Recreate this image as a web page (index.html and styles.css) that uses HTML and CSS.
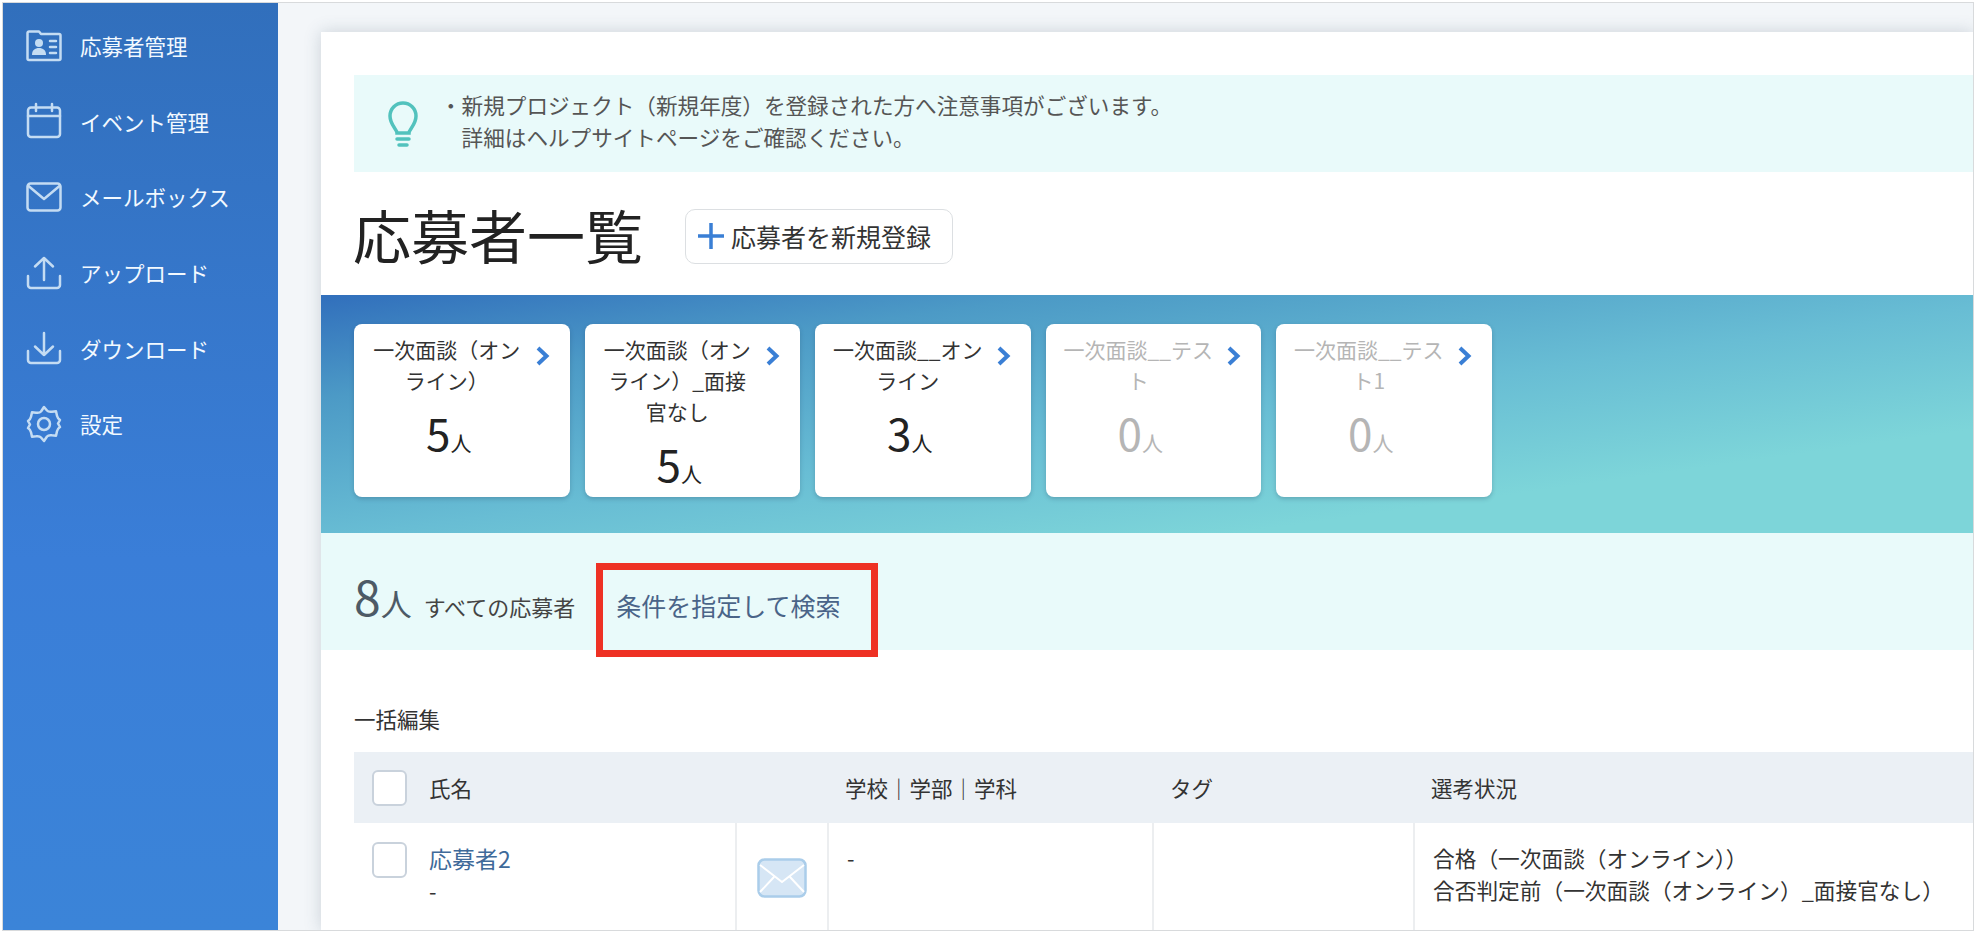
FILE: index.html
```html
<!DOCTYPE html>
<html lang="ja">
<head>
    <meta charset="UTF-8">
    <title>応募者一覧</title>
    <link rel="stylesheet" href="styles.css">
</head>
<body>
<div class="frame">
    <nav class="sidebar">
        <a class="nav-item">
            <svg class="nav-icon" viewBox="0 0 36 32"><path d="M3 1.500h10l2 2.500h18a1.500 1.500 0 0 1 1.500 1.500v23a1.500 1.500 0 0 1-1.500 1.500H3a1.500 1.500 0 0 1-1.500-1.500V3A1.500 1.500 0 0 1 3 1.500z"/><circle class="fill" cx="13" cy="13" r="4"/><path class="fill" d="M6 25c0-5 3-7 7-7s7 2 7 7z"/><path d="M24 11h6M24 17h6M24 23h6"/></svg>
            <span>応募者管理</span>
        </a>
        <a class="nav-item">
            <svg class="nav-icon" viewBox="0 0 36 36"><rect x="2" y="4.500" width="32" height="29.500" rx="3"/><path d="M2 13h32M10 1v7M26 1v7"/></svg>
            <span>イベント管理</span>
        </a>
        <a class="nav-item">
            <svg class="nav-icon" viewBox="0 0 36 30"><rect x="1.500" y="1.500" width="33" height="27" rx="3"/><path d="M2.500 4l15.500 13L33.500 4"/></svg>
            <span>メールボックス</span>
        </a>
        <a class="nav-item">
            <svg class="nav-icon" viewBox="0 0 36 34"><path d="M18 24V2M9 10.500L18 2l9 8.500M2 20v9a3 3 0 0 0 3 3h26a3 3 0 0 0 3-3v-9"/></svg>
            <span>アップロード</span>
        </a>
        <a class="nav-item">
            <svg class="nav-icon" viewBox="0 0 36 34"><path d="M18 2v22M9 15.500l9 8.500 9-8.500M2 20v9a3 3 0 0 0 3 3h26a3 3 0 0 0 3-3v-9"/></svg>
            <span>ダウンロード</span>
        </a>
        <a class="nav-item">
            <svg class="nav-icon" viewBox="0 0 36 38"><path d="M18 2l3 3.500c1.300 1.500 3 1.500 5 1.200l4-.4 1 4.500c.4 1.800 1.500 3.200 3 4.200l-2 3.500 2 3.500c-1.500 1-2.600 2.400-3 4.200l-1 4.500-4-.4c-2-.3-3.700-.3-5 1.200L18 36l-3-3.500c-1.300-1.500-3-1.500-5-1.200l-4 .4-1-4.500c-.4-1.800-1.500-3.200-3-4.200l2-3.500-2-3.500c1.500-1 2.600-2.400 3-4.200l1-4.500 4 .4c2 .3 3.700.3 5-1.200z"/><circle cx="18" cy="19" r="6"/></svg>
            <span>設定</span>
        </a>
    </nav>

    <main class="main">
        <div class="card">
            <div class="notice">
                <svg class="bulb" viewBox="0 0 30 46"><path d="M9 32c0-4-7-8-7-17a13 13 0 0 1 26 0c0 9-7 13-7 17z"/><path class="bulb-base" d="M9 38h12M11 44h8"/></svg>
                <p>・新規プロジェクト（新規年度）を登録された方へ注意事項がございます。<br>　詳細はヘルプサイトページをご確認ください。</p>
            </div>

            <div class="title-row">
                <h1>応募者一覧</h1>
                <button class="add-btn">
                    <svg viewBox="0 0 26 26"><path d="M13 0v26M0 13h26"/></svg>
                    応募者を新規登録
                </button>
            </div>

            <div class="stages">
                <div class="stage">
                    <div class="stage-head">
                        <div class="stage-name">一次面談（オン<br>ライン）</div>
                        <svg class="chevron" viewBox="0 0 15 20"><path d="M3 2l8.500 8L3 18"/></svg>
                    </div>
                    <div class="stage-count">5<small>人</small></div>
                </div>
                <div class="stage">
                    <div class="stage-head">
                        <div class="stage-name">一次面談（オン<br>ライン）_面接<br>官なし</div>
                        <svg class="chevron" viewBox="0 0 15 20"><path d="M3 2l8.500 8L3 18"/></svg>
                    </div>
                    <div class="stage-count">5<small>人</small></div>
                </div>
                <div class="stage">
                    <div class="stage-head">
                        <div class="stage-name">一次面談__オン<br>ライン</div>
                        <svg class="chevron" viewBox="0 0 15 20"><path d="M3 2l8.500 8L3 18"/></svg>
                    </div>
                    <div class="stage-count">3<small>人</small></div>
                </div>
                <div class="stage empty">
                    <div class="stage-head">
                        <div class="stage-name">一次面談__テス<br>ト</div>
                        <svg class="chevron" viewBox="0 0 15 20"><path d="M3 2l8.500 8L3 18"/></svg>
                    </div>
                    <div class="stage-count">0<small>人</small></div>
                </div>
                <div class="stage empty">
                    <div class="stage-head">
                        <div class="stage-name">一次面談__テス<br>ト1</div>
                        <svg class="chevron" viewBox="0 0 15 20"><path d="M3 2l8.500 8L3 18"/></svg>
                    </div>
                    <div class="stage-count">0<small>人</small></div>
                </div>
            </div>

            <div class="summary">
                <span class="total">8<small>人</small></span>
                <span class="total-label">すべての応募者</span>
                <a class="search-link">条件を指定して検索</a>
                <span class="highlight"></span>
            </div>

            <div class="bulk">一括編集</div>

            <div class="table-row table-head">
                <div class="cell name-cell wide"><span class="check"></span>氏名</div>
                <div class="cell">学校｜学部｜学科</div>
                <div class="cell">タグ</div>
                <div class="cell">選考状況</div>
            </div>
            <div class="table-row">
                <div class="cell name-cell">
                    <span class="check"></span>
                    <div><a class="name-link">応募者2</a><br>-</div>
                </div>
                <div class="cell mail-cell">
                    <svg class="mail" viewBox="0 0 50 40"><rect x="1.500" y="1.500" width="47" height="37" rx="6"/><path d="M3 7l22 17L47 7M3 34l14-15M47 34L33 19"/></svg>
                </div>
                <div class="cell">-</div>
                <div class="cell"></div>
                <div class="cell status-cell">合格（一次面談（オンライン））<br>合否判定前（一次面談（オンライン）_面接官なし）</div>
            </div>
        </div>
    </main>
</div>
</body>
</html>
```

FILE: styles.css
```css
* {
    box-sizing: border-box;
}
body {
    margin: 0;
    background: white;
    font-family: "Noto Sans CJK JP", sans-serif;
    color: #333;
    overflow: hidden;
}
.frame {
    display: flex;
    height: 929px;
    margin: 2px 4px 0 2px;
    border: 1px solid #d8dadc;
    overflow: hidden;
}

/* sidebar */
.sidebar {
    flex: 0 0 275px;
    padding-top: 5px;
    background: linear-gradient(180deg, #316fbc 0%, #3a7ed8 60%, #3b84d8 100%);
}
.nav-item {
    display: flex;
    align-items: center;
    height: 75.6px;
    padding-left: 23px;
    color: #f2f9ff;
    font-size: 21.500px;
}
.nav-item span {
    margin-left: 18px;
}
.nav-icon {
    flex: 0 0 36px;
    width: 36px;
    height: 38px;
    fill: none;
    stroke: #c4dcf3;
    stroke-width: 2.500;
    stroke-linecap: round;
    stroke-linejoin: round;
}
.nav-icon .fill {
    fill: #c4dcf3;
    stroke: none;
}

/* main */
.main {
    flex: 1;
    min-width: 0;
    padding: 29px 0 0 43px;
    background: #f3f6f9;
}
.card {
    position: relative;
    height: 100%;
    padding-top: 43px;
    background: white;
    box-shadow: 0 0 16px rgba(60, 80, 100, 0.22);
}
.notice {
    display: flex;
    align-items: center;
    gap: 22px;
    height: 97px;
    margin-left: 33px;
    padding-left: 34px;
    background: #e9fafa;
}
.notice p {
    margin: 0;
    padding-bottom: 5px;
    font-size: 21.600px;
    line-height: 32px;
    color: #555;
}
.bulb {
    flex: 0 0 30px;
    width: 30px;
    height: 46px;
    fill: none;
    stroke: #52c2bd;
    stroke-width: 3.500;
    stroke-linecap: round;
}
.title-row {
    display: flex;
    align-items: center;
    gap: 42px;
    height: 123px;
    padding-left: 32px;
}
h1 {
    margin: 0;
    font-size: 58px;
    font-weight: 400;
    color: #222;
}
.add-btn {
    display: flex;
    align-items: center;
    gap: 7px;
    width: 268px;
    height: 55px;
    margin-top: 5px;
    padding: 0 0 0 12px;
    background: white;
    border: 1.500px solid #dcdfe2;
    border-radius: 10px;
    font: inherit;
    font-size: 25px;
    color: #333;
    white-space: nowrap;
}
.add-btn svg {
    flex: 0 0 26px;
    width: 26px;
    height: 26px;
    fill: none;
    stroke: #3a7fd5;
    stroke-width: 3.500;
}

/* stage cards */
.stages {
    display: flex;
    gap: 15px;
    height: 238px;
    padding: 29px 0 0 33px;
    background: linear-gradient(172deg, #316fbc 0%, #4c9ac6 22%, #68bdd4 52%, #7dd5d9 78%);
}
.stage {
    flex: 0 0 215.500px;
    height: 173px;
    padding: 10px 20px 0 8px;
    background: white;
    border-radius: 8px;
    box-shadow: 0 2px 4px rgba(30, 60, 90, 0.25);
}
.stage-head {
    display: flex;
    gap: 3px;
}
.stage-name {
    flex: 1;
    font-size: 21px;
    line-height: 31px;
    text-align: center;
    white-space: nowrap;
}
.chevron {
    flex: 0 0 15px;
    width: 15px;
    height: 20px;
    margin-top: 12px;
    fill: none;
    stroke: #3a7fd5;
    stroke-width: 4;
}
.stage-count {
    margin-top: 12px;
    padding-right: 14px;
    font-size: 44px;
    line-height: 48px;
    text-align: center;
    color: #222;
}
.stage-count small {
    font-size: 21px;
}
.stage.empty .stage-name,
.stage.empty .stage-count {
    color: #b5b5b5;
}

/* summary */
.summary {
    position: relative;
    display: flex;
    align-items: baseline;
    height: 117px;
    padding: 30px 0 0 33px;
    background: #e9fafa;
}
.total {
    font-size: 48px;
    line-height: 64px;
    color: #4d5a66;
}
.total small {
    font-size: 31px;
}
.total-label {
    margin-left: 12px;
    font-size: 22px;
    color: #444;
}
.search-link {
    margin-left: 41px;
    font-size: 25px;
    color: #4a6488;
}
.highlight {
    position: absolute;
    left: 275px;
    top: 30px;
    width: 282px;
    height: 94px;
    border: 7px solid #ee3124;
}

/* table */
.bulk {
    padding: 54px 0 18px 33px;
    font-size: 21.500px;
    line-height: 30px;
}
.table-row {
    display: grid;
    grid-template-columns: 381px 92px 325px 261px 1fr;
    margin-left: 33px;
    font-size: 21.500px;
    line-height: 32px;
}
.table-head {
    grid-template-columns: 473px 325px 261px 1fr;
    height: 71px;
    background: #ebf0f5;
}
.table-head .cell {
    display: flex;
    align-items: center;
    padding-top: 0;
    border: none;
}
.cell {
    min-height: 108px;
    padding: 19px 18px 0;
    border-left: 2px solid #eceef0;
    white-space: nowrap;
}
.table-head .cell {
    min-height: 0;
}
.status-cell {
    font-size: 21.700px;
}
.name-cell,
.table-head .name-cell {
    display: flex;
    align-items: flex-start;
    padding-left: 18px;
    border-left: none;
}
.table-head .name-cell {
    align-items: center;
}
.check {
    flex: 0 0 35px;
    width: 35px;
    height: 36px;
    margin-right: 22px;
    background: white;
    border: 2px solid #c9d2dc;
    border-radius: 6px;
}
.name-link {
    font-size: 23px;
    color: #3f6a9a;
}
.mail-cell {
    padding: 35px 0 0 20px;
}
.mail {
    width: 50px;
    height: 40px;
    fill: #d6e6f5;
    stroke: #aacdea;
    stroke-width: 2.500;
}
.mail path {
    fill: none;
    stroke: white;
    stroke-width: 2;
}
```
